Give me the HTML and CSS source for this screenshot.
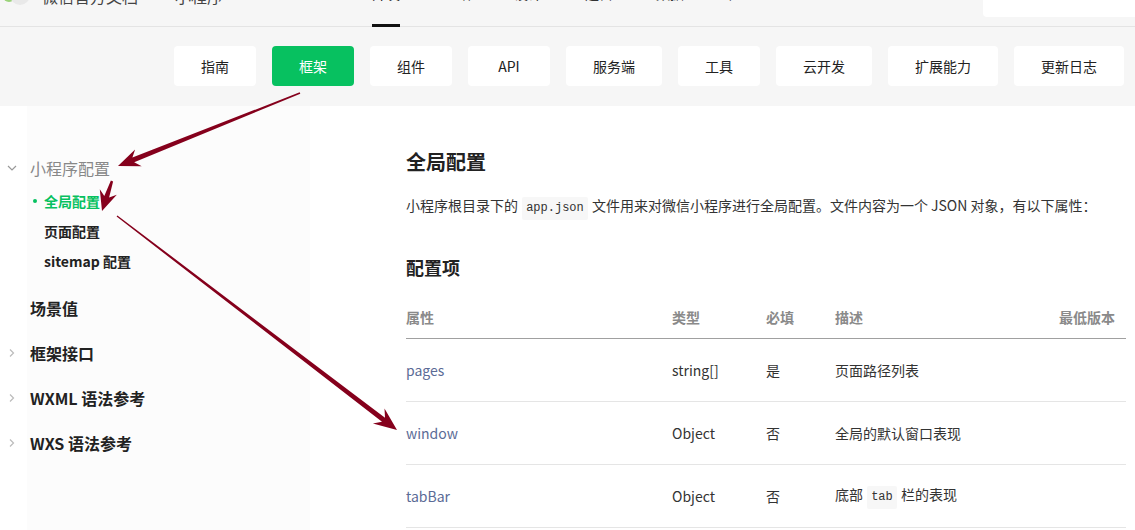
FILE: index.html
```html
<!DOCTYPE html>
<html lang="zh-CN">
<head>
<meta charset="utf-8">
<title>全局配置 | 微信开放文档</title>
<link rel="stylesheet" href="styles.css">
</head>
<body>
<header class="topbar">
  <div class="brand">
    <svg class="logo" width="28" height="28" viewBox="0 0 28 28">
      <circle cx="6" cy="14" r="6" fill="#9bd37a"/>
      <circle cx="17" cy="13" r="10" fill="#e9e9e9"/>
    </svg>
    <span class="brand-name">微信官方文档</span>
    <span class="brand-sub">小程序</span>
  </div>
  <nav class="mainnav">
    <a class="mainnav-item active">开发</a>
    <a class="mainnav-item">介绍</a>
    <a class="mainnav-item">设计</a>
    <a class="mainnav-item">运营</a>
    <a class="mainnav-item">数据</a>
    <a class="mainnav-item">社区</a>
  </nav>
  <div class="search"></div>
</header>

<div class="tabbar">
  <a class="tab">指南</a>
  <a class="tab active">框架</a>
  <a class="tab">组件</a>
  <a class="tab">API</a>
  <a class="tab">服务端</a>
  <a class="tab">工具</a>
  <a class="tab">云开发</a>
  <a class="tab">扩展能力</a>
  <a class="tab">更新日志</a>
</div>

<div class="page">
  <aside class="sidebar">
    <div class="group open">
      <div class="group-title muted">
        <span class="chev"><svg width="10" height="10" viewBox="0 0 10 10"><path d="M1 3 L5 7 L9 3" fill="none" stroke="#999" stroke-width="1.2"/></svg></span>
        <span>小程序配置</span>
      </div>
      <ul class="sublist">
        <li class="subitem active"><span class="dot"></span>全局配置</li>
        <li class="subitem"><span class="dot"></span>页面配置</li>
        <li class="subitem"><span class="dot"></span>sitemap 配置</li>
      </ul>
    </div>
    <div class="group-title first-level"><span class="chev"></span><span>场景值</span></div>
    <div class="group-title"><span class="chev"><svg width="10" height="10" viewBox="0 0 10 10"><path d="M3 1.5 L6.5 5 L3 8.5" fill="none" stroke="#bbb" stroke-width="1.2"/></svg></span><span>框架接口</span></div>
    <div class="group-title"><span class="chev"><svg width="10" height="10" viewBox="0 0 10 10"><path d="M3 1.5 L6.5 5 L3 8.5" fill="none" stroke="#bbb" stroke-width="1.2"/></svg></span><span>WXML 语法参考</span></div>
    <div class="group-title"><span class="chev"><svg width="10" height="10" viewBox="0 0 10 10"><path d="M3 1.5 L6.5 5 L3 8.5" fill="none" stroke="#bbb" stroke-width="1.2"/></svg></span><span>WXS 语法参考</span></div>
  </aside>

  <main class="content">
    <h1 class="title">全局配置</h1>
    <p class="lead">小程序根目录下的 <code>app.json</code> 文件用来对微信小程序进行全局配置。文件内容为一个 JSON 对象，有以下属性：</p>
    <h2 class="subtitle">配置项</h2>
    <div class="table">
      <div class="row head">
        <div class="cell">属性</div>
        <div class="cell">类型</div>
        <div class="cell">必填</div>
        <div class="cell">描述</div>
        <div class="cell right">最低版本</div>
      </div>
      <div class="row">
        <div class="cell prop">pages</div>
        <div class="cell">string[]</div>
        <div class="cell">是</div>
        <div class="cell">页面路径列表</div>
        <div class="cell right"></div>
      </div>
      <div class="row">
        <div class="cell prop">window</div>
        <div class="cell">Object</div>
        <div class="cell">否</div>
        <div class="cell">全局的默认窗口表现</div>
        <div class="cell right"></div>
      </div>
      <div class="row">
        <div class="cell prop">tabBar</div>
        <div class="cell">Object</div>
        <div class="cell">否</div>
        <div class="cell">底部 <code>tab</code> 栏的表现</div>
        <div class="cell right"></div>
      </div>
    </div>
  </main>
</div>

<svg class="annotations" width="1135" height="530" viewBox="0 0 1135 530">
  <polygon points="299.7,92.3 132.4,157.6 135.1,149.5 118,166 141.7,166.2 134.2,162.2 300.3,93.7" fill="#85001c"/>
  <polygon points="110.9,180.6 104.3,196.0 99.8,189.2 102,211 116.8,194.8 109.1,197.6 113.1,181.4" fill="#85001c"/>
  <polygon points="116.6,216.6 382.0,421.7 372.9,423.6 397,430 384.5,408.5 385.0,417.7 117.4,215.4" fill="#85001c"/>
</svg>
</body>
</html>
```

FILE: styles.css
```css
* { box-sizing: border-box; }

body {
  margin: 0;
  width: 1135px;
  height: 530px;
  overflow: hidden;
  position: relative;
  background: #fff;
  color: #333;
  font-family: "Noto Sans CJK SC", "Noto Sans", sans-serif;
  font-size: 14px;
}

/* top bar (scrolled, mostly cut off) */
.topbar {
  display: flex;
  align-items: flex-start;
  height: 27px;
  background: #f6f6f6;
  border-bottom: 1px solid #e4e4e4;
}

.brand {
  display: flex;
  align-items: center;
  margin-top: -19px;
  height: 30px;
  padding-left: 3px;
  width: 372px;
  color: #444;
  font-size: 16px;
  line-height: 22px;
}

.logo { flex: none; }

.brand-name { margin-left: 11px; }

.brand-sub { margin-left: 37px; }

.mainnav {
  display: flex;
  gap: 43px;
}

.mainnav-item {
  display: block;
  height: 44px;
  margin-top: -17px;
  border-bottom: 3px solid transparent;
  line-height: 20px;
  color: #333;
  font-size: 14px;
}

.mainnav-item.active {
  border-bottom-color: #111;
  color: #111;
}

.search {
  margin-left: auto;
  width: 152px;
  height: 17px;
  background: #fff;
  border-bottom-left-radius: 4px;
}

/* secondary tabs */
.tabbar {
  display: flex;
  gap: 16px;
  height: 79px;
  padding: 19px 0 0 174px;
  background: #f6f6f6;
}

.tab {
  display: flex;
  align-items: center;
  justify-content: center;
  height: 40px;
  min-width: 82px;
  padding: 0 27px;
  background: #fff;
  border-radius: 4px;
  color: #222;
  font-size: 14px;
}

.tab.active {
  background: #07c160;
  color: #fff;
}

/* page */
.page {
  display: flex;
  height: 424px;
}

.sidebar {
  flex: none;
  width: 310px;
  padding-top: 50px;
  padding-left: 5px;
  background: linear-gradient(to right, #fff 27px, #fcfcfc 27px);
}

.group-title {
  display: flex;
  align-items: center;
  height: 45px;
  color: #222;
  font-size: 16px;
  font-weight: 600;
}

.group-title.muted {
  height: 24px;
  color: #888;
  font-weight: 400;
}

.group-title.first-level { margin-top: 9px; }

.chev {
  display: flex;
  align-items: center;
  width: 25px;
  padding-left: 2px;
}

.sublist {
  list-style: none;
  margin: 6px 0 0;
  padding: 0 0 0 28px;
}

.subitem {
  display: flex;
  align-items: center;
  height: 30px;
  color: #222;
  font-size: 14px;
  font-weight: 600;
}

.dot {
  width: 4px;
  height: 4px;
  margin-right: 7px;
  border-radius: 50%;
  background: #07c160;
  visibility: hidden;
}

.subitem.active { color: #07c160; }
.subitem.active .dot { visibility: visible; }

/* content */
.content {
  flex: none;
  width: 816px;
  padding-left: 96px;
}

.title {
  margin: 42px 0 0;
  font-size: 20px;
  line-height: 28px;
  font-weight: 700;
  color: #222;
}

.lead {
  margin: 17px 0 0;
  font-size: 14px;
  line-height: 24px;
  color: #333;
}

code {
  display: inline-block;
  padding: 0 4px;
  margin: 0 1px;
  background: #f7f7f7;
  border-radius: 2px;
  font-family: "Liberation Mono", monospace;
  font-size: 12px;
  line-height: 23px;
  color: #333;
  vertical-align: baseline;
}

.subtitle {
  margin: 34px 0 0;
  font-size: 18px;
  line-height: 26px;
  font-weight: 700;
  color: #222;
}

.table {
  margin-top: 15px;
  width: 720px;
}

.row {
  display: grid;
  grid-template-columns: 266px 94px 69px 1fr 120px;
  align-items: center;
  height: 63px;
  border-bottom: 1px solid #e5e5e5;
  font-size: 14px;
  color: #333;
}

.row.head {
  height: 44px;
  border-bottom: 1px solid #a0a0a0;
  color: #8a8a8a;
  font-weight: 600;
}

.cell.right {
  text-align: right;
  padding-right: 11px;
}

.cell.prop { color: #5b6b96; }

.annotations {
  position: absolute;
  top: 0;
  left: 0;
  pointer-events: none;
}
```
